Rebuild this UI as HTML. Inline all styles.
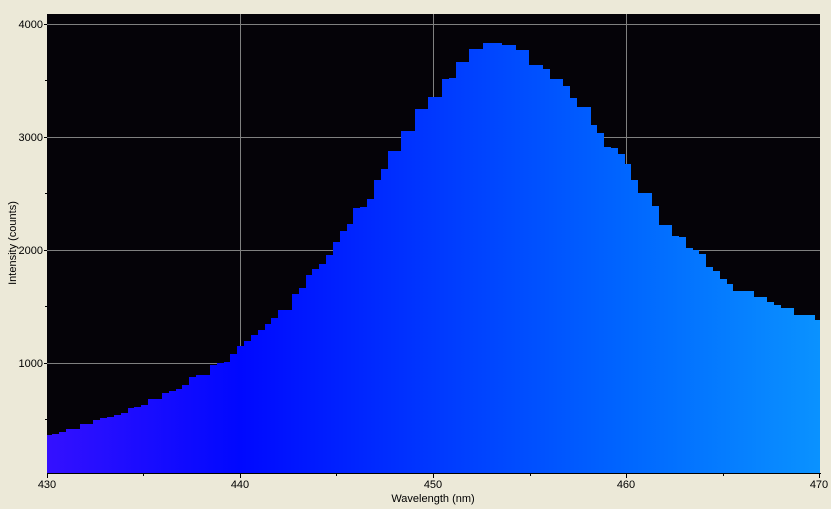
<!DOCTYPE html>
<html><head><style>
body{margin:0;width:831px;height:509px;background:#ece9d8;overflow:hidden;font-family:"Liberation Sans",sans-serif}
</style></head><body>
<svg width="831" height="509" xmlns="http://www.w3.org/2000/svg" style="position:absolute;left:0;top:0">
<defs><linearGradient id="g" x1="47" x2="820" y1="0" y2="0" gradientUnits="userSpaceOnUse">
<stop offset="0" stop-color="#3410ff"/><stop offset="0.25" stop-color="#0008ff"/><stop offset="0.5" stop-color="#0038ff"/><stop offset="0.75" stop-color="#0066ff"/><stop offset="1" stop-color="#0a92ff"/></linearGradient></defs>
<rect x="47" y="14" width="773" height="459" fill="#050308"/>
<g stroke="#808080" stroke-width="1">
<line x1="240.5" y1="14" x2="240.5" y2="473"/><line x1="433.5" y1="14" x2="433.5" y2="473"/><line x1="626.5" y1="14" x2="626.5" y2="473"/>
<line x1="47" y1="24.5" x2="820" y2="24.5"/><line x1="47" y1="137.5" x2="820" y2="137.5"/><line x1="47" y1="250.5" x2="820" y2="250.5"/><line x1="47" y1="363.5" x2="820" y2="363.5"/>
</g>
<path fill="url(#g)" d="M47,473 V435 H52 V434 H59 V432 H66 V429 H80 V424 H93 V420 H100 V418 H107 V417 H114 V415 H121 V413 H128 V408 H134 V407 H141 V405 H148 V399 H162 V393 H169 V391 H176 V389 H182 V385 H189 V377 H196 V375 H210 V365 H217 V363 H224 V362 H230 V354 H237 V346 H244 V341 H251 V335 H258 V330 H265 V324 H271 V318 H278 V310 H292 V294 H299 V288 H306 V275 H312 V269 H319 V264 H326 V255 H333 V242 H340 V231 H347 V224 H353 V208 H360 V207 H367 V199 H374 V180 H381 V169 H388 V151 H401 V131 H415 V109 H428 V97 H442 V79 H449 V78 H456 V62 H469 V49 H483 V43 H502 V45 H516 V50 H529 V65 H543 V69 H550 V79 H563 V86 H570 V98 H577 V107 H591 V125 H597 V133 H604 V147 H611 V148 H618 V154 H625 V164 H631 V180 H638 V193 H652 V206 H659 V225 H672 V236 H679 V237 H686 V248 H693 V250 H699 V254 H706 V267 H713 V271 H720 V279 H727 V284 H733 V291 H754 V297 H767 V302 H774 V305 H781 V308 H794 V315 H815 V320 H820 V473 Z"/>
<g stroke="#000" stroke-width="1">
<line x1="47" y1="473.5" x2="821" y2="473.5"/>
<line x1="47.5" y1="473" x2="47.5" y2="478"/><line x1="240.5" y1="473" x2="240.5" y2="478"/><line x1="433.5" y1="473" x2="433.5" y2="478"/><line x1="626.5" y1="473" x2="626.5" y2="478"/><line x1="819.5" y1="473" x2="819.5" y2="478"/>
<line x1="143.5" y1="473" x2="143.5" y2="476"/><line x1="336.5" y1="473" x2="336.5" y2="476"/><line x1="530.5" y1="473" x2="530.5" y2="476"/><line x1="723.5" y1="473" x2="723.5" y2="476"/>
<line x1="44" y1="24.5" x2="47" y2="24.5"/><line x1="44" y1="137.5" x2="47" y2="137.5"/><line x1="44" y1="250.5" x2="47" y2="250.5"/><line x1="44" y1="363.5" x2="47" y2="363.5"/>
<line x1="45" y1="80.5" x2="47" y2="80.5"/><line x1="45" y1="193.5" x2="47" y2="193.5"/><line x1="45" y1="306.5" x2="47" y2="306.5"/><line x1="45" y1="419.5" x2="47" y2="419.5"/>
</g>
<g font-size="11" fill="#000" text-anchor="end">
<text x="43" y="28">4000</text><text x="43" y="141">3000</text><text x="43" y="254">2000</text><text x="43" y="367">1000</text>
</g>
<g font-size="11" fill="#000" text-anchor="middle">
<text x="47" y="488">430</text><text x="240" y="488">440</text><text x="433" y="488">450</text><text x="626" y="488">460</text><text x="819" y="488">470</text>
<text x="433" y="502">Wavelength (nm)</text>
<text transform="translate(16,243) rotate(-90)">Intensity (counts)</text>
</g>
</svg>
</body></html>
